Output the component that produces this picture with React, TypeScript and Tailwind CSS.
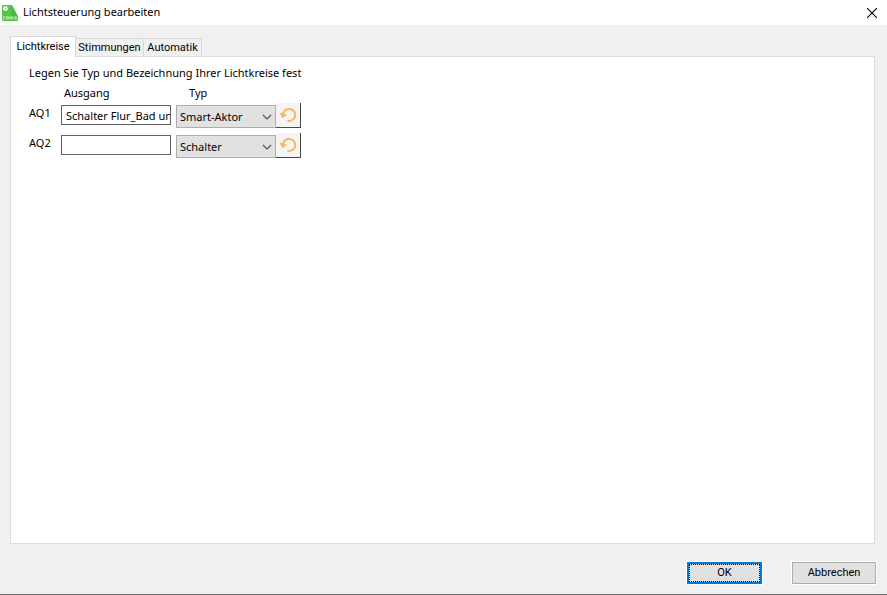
import React, { useState } from 'react';

type CircuitType = 'Smart-Aktor' | 'Schalter' | 'Dimmer';

interface Circuit {
  id: string;
  name: string;
  type: CircuitType;
}

const TABS = [
  { name: 'Lichtkreise', width: 'w-[66px]' },
  { name: 'Stimmungen', width: 'w-[68px]' },
  { name: 'Automatik', width: 'w-[58px]' },
];
const TYPES: CircuitType[] = ['Smart-Aktor', 'Schalter', 'Dimmer'];

const INITIAL: Circuit[] = [
  { id: 'AQ1', name: 'Schalter Flur_Bad unten', type: 'Smart-Aktor' },
  { id: 'AQ2', name: '', type: 'Schalter' },
];

const ConfigIcon = () => (
  <svg className="w-4 h-4 shrink-0" viewBox="0 0 16 16" aria-hidden="true">
    <path fill="#55c447" d="M0 1a1 1 0 0 1 1-1h9l6 11.500V15a1 1 0 0 1-1 1H1a1 1 0 0 1-1-1z" />
    <path fill="#3fae3a" d="M10 0l6 11.500H9z" opacity="0.500" />
    <circle cx="3.500" cy="3.500" r="1.500" fill="none" stroke="#fff" strokeWidth="1.500" />
    <path stroke="#fff" strokeWidth="1" d="M3.500 1v1M3.500 5v1M1 3.500h1M5 3.500h1M1.700 1.700l.7.7M4.600 4.600l.7.7M1.700 5.300l.7-.7M4.600 2.400l.7-.7" />
    <path
      fill="none"
      stroke="#c5efbd"
      strokeWidth="0.800"
      d="M3 11.700H1.300v2.400H3M4 11.700h1.700v2.400H4zM6.800 14.400v-2.700l1.500 2.400v-2.700M9.500 14.400v-2.700h1.400M9.500 13h1.200M12 11.400v3M14.900 11.700h-1.600v2.400h1.500V13"
    />
  </svg>
);

const UndoIcon = () => (
  <svg className="w-[18px] h-[18px]" viewBox="0 0 18 18" aria-hidden="true">
    <path fill="none" stroke="#f9b55f" strokeWidth="2" d="M4 8C4.800 4.700 7.300 3 10.200 3c3.400 0 6 2.600 6 5.900s-2.700 6-6 6c-.6 0-1.200-.1-1.700-.2" />
    <path fill="#f9b55f" d="M.3 6.300l7.700 2.500-4.500 3.500z" />
  </svg>
);

export default function App() {
  const [tab, setTab] = useState('Lichtkreise');
  const [circuits, setCircuits] = useState(INITIAL);

  const update = (id: string, patch: Partial<Circuit>) =>
    setCircuits(list => list.map(c => (c.id === id ? { ...c, ...patch } : c)));

  const reset = (id: string) => update(id, INITIAL.find(c => c.id === id)!);

  return (
    <div className="flex min-h-screen flex-col border-b border-[#6e6e6e] bg-[#f0f0f0] font-['Noto_Sans',sans-serif] text-[11px] text-black">
      {/* Title bar */}
      <header className="flex h-[25px] items-center bg-white pl-0.5 pr-2.5">
        <ConfigIcon />
        <h1 className="ml-[5px] flex-1">Lichtsteuerung bearbeiten</h1>
        <button type="button" aria-label="Schließen">
          <svg className="w-2.5 h-2.5" viewBox="0 0 10 10">
            <path stroke="#000" strokeWidth="1.100" d="M0 0l10 10M10 0L0 10" />
          </svg>
        </button>
      </header>

      <main className="flex flex-1 flex-col pl-2.5 pr-3 pt-[11px]">
        <div role="tablist" className="flex items-end font-[Roboto,sans-serif]">
          {TABS.map(({ name, width }) => (
            <button
              key={name}
              type="button"
              role="tab"
              aria-selected={tab === name}
              onClick={() => setTab(name)}
              className={`${width} border border-b-0 border-[#d9d9d9] leading-4 whitespace-nowrap ${
                tab === name
                  ? 'relative z-10 -mb-px h-[21px] bg-white'
                  : 'h-[18px] border-l-0 bg-[#f0f0f0] pt-px'
              }`}
            >
              {name}
            </button>
          ))}
        </div>

        <section role="tabpanel" className="flex-1 border border-[#dcdcdc] bg-white pl-[18px] pt-1.5">
          <p className="leading-5">Legen Sie Typ und Bezeichnung Ihrer Lichtkreise fest</p>
          <div className="flex pl-[35px] leading-5">
            <span className="w-[125px]">Ausgang</span>
            <span>Typ</span>
          </div>
          <div className="flex flex-col gap-[5px]">
            {circuits.map(c => (
              <div key={c.id} className="flex h-[25px] items-start">
                <label htmlFor={c.id} className="w-8 leading-5">
                  {c.id}
                </label>
                <input
                  id={c.id}
                  type="text"
                  value={c.name}
                  onChange={e => update(c.id, { name: e.target.value })}
                  className="mt-0.5 h-5 w-[110px] border border-[#646464] bg-white pl-1 outline-none"
                />
                <div className="relative ml-[5px] mt-0.5">
                  <select
                    aria-label={`Typ ${c.id}`}
                    value={c.type}
                    onChange={e => update(c.id, { type: e.target.value as CircuitType })}
                    className="block h-[23px] w-[100px] appearance-none border border-[#adadad] bg-[#e1e1e1] pl-[3px] pt-0.5 outline-none"
                  >
                    {TYPES.map(t => (
                      <option key={t}>{t}</option>
                    ))}
                  </select>
                  <svg className="pointer-events-none absolute right-1 top-2 h-2 w-2.5" viewBox="0 0 10 8">
                    <path fill="none" stroke="#505050" strokeWidth="1.100" d="M1 2l4 4 4-4" />
                  </svg>
                </div>
                <button
                  type="button"
                  aria-label={`${c.id} zurücksetzen`}
                  onClick={() => reset(c.id)}
                  className="flex h-[25px] w-[25px] items-center justify-center border-b border-r border-[#484848] bg-[#f4f4f4]"
                >
                  <UndoIcon />
                </button>
              </div>
            ))}
          </div>
        </section>
      </main>

      <footer className="flex justify-end gap-[30px] pb-2.5 pl-2.5 pr-[11px] pt-[18px] font-[Roboto,sans-serif]">
        <button type="button" className="h-[22px] w-[75px] border-2 border-[#0078d7] bg-[#e1e1e1] ring-1 ring-white">
          <span className="flex h-full items-center justify-center border border-dotted border-black">OK</span>
        </button>
        <button type="button" className="h-[22px] w-[84px] border border-[#adadad] bg-[#e1e1e1] ring-1 ring-white">
          Abbrechen
        </button>
      </footer>
    </div>
  );
}
